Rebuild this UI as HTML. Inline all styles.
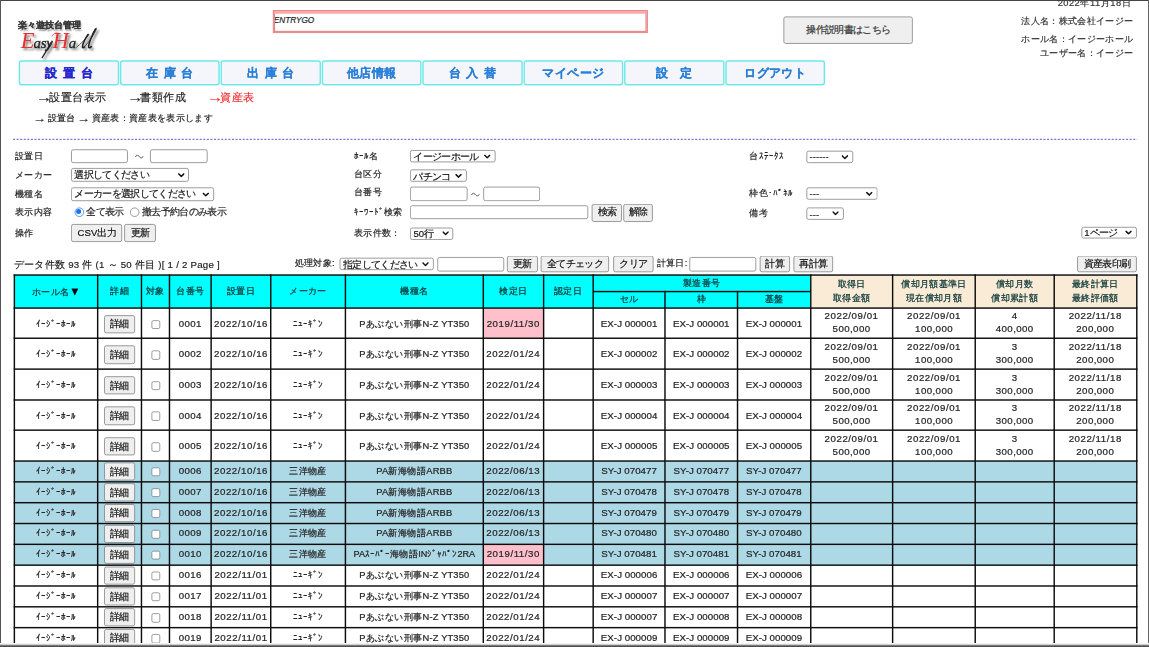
<!DOCTYPE html>
<html lang="ja"><head><meta charset="utf-8"><title>資産表</title>
<style>
html,body{margin:0;padding:0;background:#fff;}
body{width:1149px;height:647px;overflow:hidden;position:relative;font-family:"Liberation Sans",sans-serif;color:#222;}
#pg{position:absolute;left:0;top:0;width:1600px;height:901px;transform:scale(0.718125);transform-origin:0 0;font-size:13px;overflow:hidden;}
.a{position:absolute;box-sizing:border-box;white-space:nowrap;-webkit-text-stroke:.25px;}
.c{text-align:center;}
.r{text-align:right;}
.hd{font-size:13px;color:#333;}
.hdd{letter-spacing:.6px;}
.lb{font-size:13px;color:#222;}
.f13{font-size:13.33px;}
.sub{font-size:16px;color:#222;}
.red{color:#f03030;}
.ar{display:inline-block;transform:scale(1.4,1.15);}
.crumb{font-size:13px;word-spacing:1px;color:#222;}
.th{font-size:13px;color:#0e3a3a;-webkit-text-stroke:.35px;}
.th b{font-size:15px;color:#000;font-weight:normal;}
.td{font-size:13px;color:#262626;-webkit-text-stroke:.32px;}
.v{font-size:13.5px;letter-spacing:.57px;}
.vd{font-size:13.5px;letter-spacing:.75px;}
.vm{font-size:13px;letter-spacing:.2px;}
.ve{font-size:13.5px;letter-spacing:.05px;}
.vc{font-size:13.5px;letter-spacing:.31px;}
.ln{background:#0c0c0c;}
.inp{border:1px solid #767676;border-radius:3px;background:#fff;}
.sel{border:1px solid #767676;border-radius:3px;background:#fff;font-size:13.33px;color:#111;padding-left:3.2px;padding-top:1px;overflow:hidden;}
.sel .chev{position:absolute;right:5.5px;top:50%;margin-top:-2.8px;}
.sel.dash{letter-spacing:0;color:#333}
.btn{border:1px solid #767676;border-radius:3px;background:#efefef;font-size:13.33px;color:#111;text-align:center;}
.btn.big{border-color:#777;border-radius:3px;color:#333}
.radio{width:13px;height:13px;border:1px solid #767676;border-radius:50%;background:#fff;}
.radio.on{border:1.5px solid #1a73e8;}
.radio.on:after{content:"";position:absolute;left:1.5px;top:1.5px;width:7px;height:7px;border-radius:50%;background:#1a73e8;}
.cb{border:1px solid #767676;border-radius:2.5px;background:#fff;}
.nav{border:2px solid #6ee9e9;border-radius:4px;background:#f5f5fc;font-size:17px;font-weight:bold;color:#2a7fd6;text-align:center;letter-spacing:.2px;}
.nav i{display:inline-block;width:7.3px;}
.nav.act{color:#2525cc;}
.ego{border:1px solid #e57f7f;background:#f9a6a6;}
.ego2{position:absolute;left:1px;top:3px;right:1px;bottom:1px;border:1px solid #d25a5a;border-top-color:#f3a0a0;background:#fff;overflow:hidden;}
.ego2 span{position:absolute;left:-2px;top:2px;font-size:11.5px;font-style:italic;line-height:14px;color:#222;}
#frame div{position:absolute;}
</style></head>
<body>
<div id="pg">
<div class="a ego" style="left:380.16px;top:13.93px;width:522.19px;height:32.03px;"><div class="ego2"><span>ENTRYGO</span></div></div>
<div class="a btn big" style="left:1091.04px;top:22.56px;width:180.33px;height:38.57px;line-height:36.57px">操作説明書はこちら</div>
<div class="a r hd hdd" style="left:975.35px;top:-5.27px;width:600px;line-height:20px;">2022年11月18日</div>
<div class="a r hd" style="left:978.28px;top:19.8px;width:600px;line-height:20px;">法人名：株式会社イージー</div>
<div class="a r hd" style="left:978.28px;top:45.14px;width:600px;line-height:20px;">ホール名：イージーホール</div>
<div class="a r hd" style="left:978.28px;top:64.36px;width:600px;line-height:20px;">ユーザー名：イージー</div>
<div class="a nav act" style="left:26.46px;top:84.11px;width:139.6px;height:34.67px;line-height:31.27px">設<i></i>置<i></i>台</div>
<div class="a nav " style="left:166.89px;top:84.11px;width:139.6px;height:34.67px;line-height:31.27px">在<i></i>庫<i></i>台</div>
<div class="a nav " style="left:307.33px;top:84.11px;width:139.6px;height:34.67px;line-height:31.27px">出<i></i>庫<i></i>台</div>
<div class="a nav " style="left:447.76px;top:84.11px;width:139.6px;height:34.67px;line-height:31.27px">他店情報</div>
<div class="a nav " style="left:588.2px;top:84.11px;width:139.6px;height:34.67px;line-height:31.27px">台<i></i>入<i></i>替</div>
<div class="a nav " style="left:728.63px;top:84.11px;width:139.6px;height:34.67px;line-height:31.27px">マイページ</div>
<div class="a nav " style="left:869.07px;top:84.11px;width:139.6px;height:34.67px;line-height:31.27px">設　定</div>
<div class="a nav " style="left:1009.5px;top:84.11px;width:139.6px;height:34.67px;line-height:31.27px">ログアウト</div>
<div class="a sub" style="left:52.92px;top:126.47px;line-height:20px;"><span class="ar">→</span>設置台表示</div>
<div class="a sub" style="left:179.63px;top:126.47px;line-height:20px;"><span class="ar">→</span>書類作成</div>
<div class="a sub red" style="left:291.04px;top:126.47px;line-height:20px;"><span class="ar">→</span>資産表</div>
<div class="a crumb" style="left:48.74px;top:155.29px;line-height:20px;"><span class="ar">→</span> 設置台 <span class="ar">→</span> 資産表：資産表を表示します</div>
<svg class="a" style="left:18.38px;top:192.12px" width="1565.47" height="4"><line x1="0" y1="2" x2="1565.47" y2="2" stroke="#4a4ac0" stroke-width="1.25" stroke-dasharray="2.9 2.1"/></svg>
<div class="a lb" style="left:20.89px;top:206.68px;line-height:20px;">設置日</div>
<div class="a lb" style="left:20.89px;top:233.83px;line-height:20px;">メーカー</div>
<div class="a lb" style="left:20.89px;top:260.01px;line-height:20px;">機種名</div>
<div class="a lb" style="left:20.89px;top:286.19px;line-height:20px;">表示内容</div>
<div class="a lb" style="left:20.89px;top:314.18px;line-height:20px;">操作</div>
<div class="a inp" style="left:99.43px;top:207.9px;width:78.54px;height:19.5px;"></div>
<svg class="a" style="left:187.7px;top:214.93px" width="12" height="6" viewBox="0 0 12 6"><path d="M0.6 3.6 C2 0.4 4 0.4 6 3 C8 5.6 10 5.6 11.4 2.4" fill="none" stroke="#333" stroke-width="1.2"/></svg>
<div class="a inp" style="left:209.43px;top:207.9px;width:79.51px;height:19.5px;"></div>
<div class="a sel " style="left:99.43px;top:234.36px;width:163.62px;height:18.38px;line-height:16.38px"><span>選択してください</span><svg class="chev" width="9" height="6" viewBox="0 0 9 6"><path d="M1 1.2 L4.5 4.6 L8 1.2" fill="none" stroke="#111" stroke-width="2.1" stroke-linecap="square" stroke-linejoin="miter"/></svg></div>
<div class="a sel " style="left:99.43px;top:261.24px;width:198.57px;height:18.38px;line-height:16.38px"><span>メーカーを選択してください</span><svg class="chev" width="9" height="6" viewBox="0 0 9 6"><path d="M1 1.2 L4.5 4.6 L8 1.2" fill="none" stroke="#111" stroke-width="2.1" stroke-linecap="square" stroke-linejoin="miter"/></svg></div>
<div class="a radio on" style="left:103.51px;top:288.99px"></div>
<div class="a lb f13" style="left:120.45px;top:286.19px;line-height:20px;">全て表示</div>
<div class="a radio" style="left:180.93px;top:288.99px"></div>
<div class="a lb f13" style="left:197.6px;top:286.19px;line-height:20px;">撤去予約台のみ表示</div>
<div class="a btn " style="left:99.43px;top:312.2px;width:70.74px;height:24.65px;line-height:22.65px">CSV出力</div>
<div class="a btn " style="left:172.67px;top:312.2px;width:44.56px;height:24.65px;line-height:22.65px">更新</div>
<div class="a lb" style="left:492.81px;top:207.23px;line-height:20px;">ﾎｰﾙ名</div>
<div class="a lb" style="left:492.81px;top:232.85px;line-height:20px;">台区分</div>
<div class="a lb" style="left:492.81px;top:258.34px;line-height:20px;">台番号</div>
<div class="a lb" style="left:492.81px;top:286.33px;line-height:20px;">ｷｰﾜｰﾄﾞ検索</div>
<div class="a lb" style="left:492.81px;top:314.46px;line-height:20px;">表示件数：</div>
<div class="a sel " style="left:571.49px;top:209.02px;width:118.22px;height:17.27px;line-height:15.27px"><span>イージーホール</span><svg class="chev" width="9" height="6" viewBox="0 0 9 6"><path d="M1 1.2 L4.5 4.6 L8 1.2" fill="none" stroke="#111" stroke-width="2.1" stroke-linecap="square" stroke-linejoin="miter"/></svg></div>
<div class="a sel " style="left:571.49px;top:235.75px;width:78.26px;height:17.41px;line-height:15.41px"><span>パチンコ</span><svg class="chev" width="9" height="6" viewBox="0 0 9 6"><path d="M1 1.2 L4.5 4.6 L8 1.2" fill="none" stroke="#111" stroke-width="2.1" stroke-linecap="square" stroke-linejoin="miter"/></svg></div>
<div class="a inp" style="left:571.49px;top:260.12px;width:79.09px;height:19.77px;"></div>
<svg class="a" style="left:655.86px;top:267.57px" width="12" height="6" viewBox="0 0 12 6"><path d="M0.6 3.6 C2 0.4 4 0.4 6 3 C8 5.6 10 5.6 11.4 2.4" fill="none" stroke="#333" stroke-width="1.2"/></svg>
<div class="a inp" style="left:673.28px;top:260.12px;width:78.26px;height:19.77px;"></div>
<div class="a inp" style="left:571.49px;top:286.44px;width:247.17px;height:18.94px;"></div>
<div class="a btn " style="left:824.37px;top:284.07px;width:41.78px;height:24.65px;line-height:22.65px">検索</div>
<div class="a btn " style="left:867.68px;top:284.07px;width:41.22px;height:24.65px;line-height:22.65px">解除</div>
<div class="a sel " style="left:571.49px;top:316.94px;width:59.74px;height:16.57px;line-height:14.57px"><span>50行</span><svg class="chev" width="9" height="6" viewBox="0 0 9 6"><path d="M1 1.2 L4.5 4.6 L8 1.2" fill="none" stroke="#111" stroke-width="2.1" stroke-linecap="square" stroke-linejoin="miter"/></svg></div>
<div class="a lb" style="left:1043.41px;top:207.65px;line-height:20px;">台ｽﾃｰﾀｽ</div>
<div class="a lb" style="left:1043.41px;top:258.89px;line-height:20px;">枠色･ﾊﾟﾈﾙ</div>
<div class="a lb" style="left:1043.41px;top:286.88px;line-height:20px;">備考</div>
<div class="a sel dash" style="left:1123.2px;top:209.99px;width:64.47px;height:16.71px;line-height:14.71px"><span>------</span><svg class="chev" width="9" height="6" viewBox="0 0 9 6"><path d="M1 1.2 L4.5 4.6 L8 1.2" fill="none" stroke="#111" stroke-width="2.1" stroke-linecap="square" stroke-linejoin="miter"/></svg></div>
<div class="a sel dash" style="left:1123.2px;top:260.82px;width:98.45px;height:17.68px;line-height:15.68px"><span>---</span><svg class="chev" width="9" height="6" viewBox="0 0 9 6"><path d="M1 1.2 L4.5 4.6 L8 1.2" fill="none" stroke="#111" stroke-width="2.1" stroke-linecap="square" stroke-linejoin="miter"/></svg></div>
<div class="a sel dash" style="left:1123.2px;top:288.67px;width:51.8px;height:17.27px;line-height:15.27px"><span>---</span><svg class="chev" width="9" height="6" viewBox="0 0 9 6"><path d="M1 1.2 L4.5 4.6 L8 1.2" fill="none" stroke="#111" stroke-width="2.1" stroke-linecap="square" stroke-linejoin="miter"/></svg></div>
<div class="a sel " style="left:1505.59px;top:316.1px;width:77.15px;height:16.29px;line-height:14.29px"><span>1ページ</span><svg class="chev" width="9" height="6" viewBox="0 0 9 6"><path d="M1 1.2 L4.5 4.6 L8 1.2" fill="none" stroke="#111" stroke-width="2.1" stroke-linecap="square" stroke-linejoin="miter"/></svg></div>
<div class="a lb vc" style="left:19.36px;top:358.74px;line-height:20px;">データ件数 93 件 (1 ～ 50 件目 )[ 1 / 2 Page ]</div>
<div class="a lb" style="left:410.23px;top:357.21px;line-height:20px;">処理対象:</div>
<div class="a sel " style="left:473.32px;top:358.85px;width:130.34px;height:16.99px;line-height:14.99px"><span>指定してください</span><svg class="chev" width="9" height="6" viewBox="0 0 9 6"><path d="M1 1.2 L4.5 4.6 L8 1.2" fill="none" stroke="#111" stroke-width="2.1" stroke-linecap="square" stroke-linejoin="miter"/></svg></div>
<div class="a inp" style="left:608.53px;top:357.88px;width:93.02px;height:19.91px;"></div>
<div class="a btn " style="left:706.42px;top:356.07px;width:42.19px;height:23.26px;line-height:21.26px">更新</div>
<div class="a btn " style="left:753.49px;top:356.07px;width:94.55px;height:23.26px;line-height:21.26px">全てチェック</div>
<div class="a btn " style="left:854.31px;top:356.07px;width:55.7px;height:23.26px;line-height:21.26px">クリア</div>
<div class="a lb" style="left:914.6px;top:357.21px;line-height:20px;">計算日:</div>
<div class="a inp" style="left:960.28px;top:357.88px;width:93.16px;height:19.91px;"></div>
<div class="a btn " style="left:1057.75px;top:356.07px;width:42.05px;height:23.26px;line-height:21.26px">計算</div>
<div class="a btn " style="left:1104.68px;top:356.07px;width:55.56px;height:23.26px;line-height:21.26px">再計算</div>
<div class="a btn " style="left:1500.16px;top:356.07px;width:82.72px;height:23.26px;line-height:21.26px">資産表印刷</div>
<div class="a " style="left:20.19px;top:382.52px;width:1108.44px;height:46.23px;background:#00ffff;"></div>
<div class="a " style="left:1128.63px;top:382.52px;width:454.1px;height:46.23px;background:#faebd7;"></div>
<div class="a c th" style="left:-121.81px;top:395.64px;width:400px;line-height:20px;">ホール名<b>▼</b></div>
<div class="a c th" style="left:-33.59px;top:395.64px;width:400px;line-height:20px;">詳細</div>
<div class="a c th" style="left:16.19px;top:395.64px;width:400px;line-height:20px;">対象</div>
<div class="a c th" style="left:65px;top:395.64px;width:400px;line-height:20px;">台番号</div>
<div class="a c th" style="left:135.67px;top:395.64px;width:400px;line-height:20px;">設置日</div>
<div class="a c th" style="left:229.03px;top:395.64px;width:400px;line-height:20px;">メーカー</div>
<div class="a c th" style="left:376.99px;top:395.64px;width:400px;line-height:20px;">機種名</div>
<div class="a c th" style="left:514.78px;top:395.64px;width:400px;line-height:20px;">検定日</div>
<div class="a c th" style="left:591.09px;top:395.64px;width:400px;line-height:20px;">認定日</div>
<div class="a c th" style="left:777.13px;top:384.22px;width:400px;line-height:20px;">製造番号</div>
<div class="a c th" style="left:676.03px;top:407.34px;width:400px;line-height:20px;">セル</div>
<div class="a c th" style="left:776.57px;top:407.34px;width:400px;line-height:20px;">枠</div>
<div class="a c th" style="left:877.67px;top:407.34px;width:400px;line-height:20px;">基盤</div>
<div class="a c th" style="left:985.8px;top:385.47px;width:400px;line-height:20px;">取得日</div>
<div class="a c th" style="left:985.8px;top:405.25px;width:400px;line-height:20px;">取得金額</div>
<div class="a c th" style="left:1100.68px;top:385.47px;width:400px;line-height:20px;">償却月額基準日</div>
<div class="a c th" style="left:1100.68px;top:405.25px;width:400px;line-height:20px;">現在償却月額</div>
<div class="a c th" style="left:1212.99px;top:385.47px;width:400px;line-height:20px;">償却月数</div>
<div class="a c th" style="left:1212.99px;top:405.25px;width:400px;line-height:20px;">償却累計額</div>
<div class="a c th" style="left:1325.15px;top:385.47px;width:400px;line-height:20px;">最終計算日</div>
<div class="a c th" style="left:1325.15px;top:405.25px;width:400px;line-height:20px;">最終評価額</div>
<div class="a " style="left:673px;top:428.76px;width:83.55px;height:42.62px;background:#ffc0cb;"></div>
<div class="a c td" style="left:-121.81px;top:440.83px;width:400px;line-height:20px;">ｲｰｼﾞｰﾎｰﾙ</div>
<div class="a btn" style="left:144.68px;top:438.58px;width:43.45px;height:25.34px;line-height:23.34px">詳細</div>
<div class="a cb" style="left:210.76px;top:445.54px;width:12.53px;height:12.53px;"></div>
<div class="a c td v" style="left:65px;top:440.83px;width:400px;line-height:20px;">0001</div>
<div class="a c td vd" style="left:135.67px;top:440.83px;width:400px;line-height:20px;">2022/10/16</div>
<div class="a c td" style="left:229.03px;top:440.83px;width:400px;line-height:20px;">ﾆｭｰｷﾞﾝ</div>
<div class="a c td vm" style="left:376.99px;top:440.83px;width:400px;line-height:20px;">Pあぶない刑事N-Z YT350</div>
<div class="a c td vd" style="left:514.78px;top:440.83px;width:400px;line-height:20px;">2019/11/30</div>
<div class="a c td ve" style="left:676.03px;top:440.83px;width:400px;line-height:20px;">EX-J 000001</div>
<div class="a c td ve" style="left:776.57px;top:440.83px;width:400px;line-height:20px;">EX-J 000001</div>
<div class="a c td ve" style="left:877.67px;top:440.83px;width:400px;line-height:20px;">EX-J 000001</div>
<div class="a c td vd" style="left:985.8px;top:430.45px;width:400px;line-height:20px;">2022/09/01</div>
<div class="a c td v" style="left:985.8px;top:449.25px;width:400px;line-height:20px;">500,000</div>
<div class="a c td vd" style="left:1100.68px;top:430.45px;width:400px;line-height:20px;">2022/09/01</div>
<div class="a c td v" style="left:1100.68px;top:449.25px;width:400px;line-height:20px;">100,000</div>
<div class="a c td v" style="left:1212.99px;top:430.45px;width:400px;line-height:20px;">4</div>
<div class="a c td v" style="left:1212.99px;top:449.25px;width:400px;line-height:20px;">400,000</div>
<div class="a c td vd" style="left:1325.15px;top:430.45px;width:400px;line-height:20px;">2022/11/18</div>
<div class="a c td v" style="left:1325.15px;top:449.25px;width:400px;line-height:20px;">200,000</div>
<div class="a c td" style="left:-121.81px;top:483.46px;width:400px;line-height:20px;">ｲｰｼﾞｰﾎｰﾙ</div>
<div class="a btn" style="left:144.68px;top:481.2px;width:43.45px;height:25.34px;line-height:23.34px">詳細</div>
<div class="a cb" style="left:210.76px;top:488.17px;width:12.53px;height:12.53px;"></div>
<div class="a c td v" style="left:65px;top:483.46px;width:400px;line-height:20px;">0002</div>
<div class="a c td vd" style="left:135.67px;top:483.46px;width:400px;line-height:20px;">2022/10/16</div>
<div class="a c td" style="left:229.03px;top:483.46px;width:400px;line-height:20px;">ﾆｭｰｷﾞﾝ</div>
<div class="a c td vm" style="left:376.99px;top:483.46px;width:400px;line-height:20px;">Pあぶない刑事N-Z YT350</div>
<div class="a c td vd" style="left:514.78px;top:483.46px;width:400px;line-height:20px;">2022/01/24</div>
<div class="a c td ve" style="left:676.03px;top:483.46px;width:400px;line-height:20px;">EX-J 000002</div>
<div class="a c td ve" style="left:776.57px;top:483.46px;width:400px;line-height:20px;">EX-J 000002</div>
<div class="a c td ve" style="left:877.67px;top:483.46px;width:400px;line-height:20px;">EX-J 000002</div>
<div class="a c td vd" style="left:985.8px;top:473.08px;width:400px;line-height:20px;">2022/09/01</div>
<div class="a c td v" style="left:985.8px;top:491.88px;width:400px;line-height:20px;">500,000</div>
<div class="a c td vd" style="left:1100.68px;top:473.08px;width:400px;line-height:20px;">2022/09/01</div>
<div class="a c td v" style="left:1100.68px;top:491.88px;width:400px;line-height:20px;">100,000</div>
<div class="a c td v" style="left:1212.99px;top:473.08px;width:400px;line-height:20px;">3</div>
<div class="a c td v" style="left:1212.99px;top:491.88px;width:400px;line-height:20px;">300,000</div>
<div class="a c td vd" style="left:1325.15px;top:473.08px;width:400px;line-height:20px;">2022/11/18</div>
<div class="a c td v" style="left:1325.15px;top:491.88px;width:400px;line-height:20px;">200,000</div>
<div class="a c td" style="left:-121.81px;top:526.08px;width:400px;line-height:20px;">ｲｰｼﾞｰﾎｰﾙ</div>
<div class="a btn" style="left:144.68px;top:523.83px;width:43.45px;height:25.34px;line-height:23.34px">詳細</div>
<div class="a cb" style="left:210.76px;top:530.79px;width:12.53px;height:12.53px;"></div>
<div class="a c td v" style="left:65px;top:526.08px;width:400px;line-height:20px;">0003</div>
<div class="a c td vd" style="left:135.67px;top:526.08px;width:400px;line-height:20px;">2022/10/16</div>
<div class="a c td" style="left:229.03px;top:526.08px;width:400px;line-height:20px;">ﾆｭｰｷﾞﾝ</div>
<div class="a c td vm" style="left:376.99px;top:526.08px;width:400px;line-height:20px;">Pあぶない刑事N-Z YT350</div>
<div class="a c td vd" style="left:514.78px;top:526.08px;width:400px;line-height:20px;">2022/01/24</div>
<div class="a c td ve" style="left:676.03px;top:526.08px;width:400px;line-height:20px;">EX-J 000003</div>
<div class="a c td ve" style="left:776.57px;top:526.08px;width:400px;line-height:20px;">EX-J 000003</div>
<div class="a c td ve" style="left:877.67px;top:526.08px;width:400px;line-height:20px;">EX-J 000003</div>
<div class="a c td vd" style="left:985.8px;top:515.7px;width:400px;line-height:20px;">2022/09/01</div>
<div class="a c td v" style="left:985.8px;top:534.5px;width:400px;line-height:20px;">500,000</div>
<div class="a c td vd" style="left:1100.68px;top:515.7px;width:400px;line-height:20px;">2022/09/01</div>
<div class="a c td v" style="left:1100.68px;top:534.5px;width:400px;line-height:20px;">100,000</div>
<div class="a c td v" style="left:1212.99px;top:515.7px;width:400px;line-height:20px;">3</div>
<div class="a c td v" style="left:1212.99px;top:534.5px;width:400px;line-height:20px;">300,000</div>
<div class="a c td vd" style="left:1325.15px;top:515.7px;width:400px;line-height:20px;">2022/11/18</div>
<div class="a c td v" style="left:1325.15px;top:534.5px;width:400px;line-height:20px;">200,000</div>
<div class="a c td" style="left:-121.81px;top:568.71px;width:400px;line-height:20px;">ｲｰｼﾞｰﾎｰﾙ</div>
<div class="a btn" style="left:144.68px;top:566.45px;width:43.45px;height:25.34px;line-height:23.34px">詳細</div>
<div class="a cb" style="left:210.76px;top:573.42px;width:12.53px;height:12.53px;"></div>
<div class="a c td v" style="left:65px;top:568.71px;width:400px;line-height:20px;">0004</div>
<div class="a c td vd" style="left:135.67px;top:568.71px;width:400px;line-height:20px;">2022/10/16</div>
<div class="a c td" style="left:229.03px;top:568.71px;width:400px;line-height:20px;">ﾆｭｰｷﾞﾝ</div>
<div class="a c td vm" style="left:376.99px;top:568.71px;width:400px;line-height:20px;">Pあぶない刑事N-Z YT350</div>
<div class="a c td vd" style="left:514.78px;top:568.71px;width:400px;line-height:20px;">2022/01/24</div>
<div class="a c td ve" style="left:676.03px;top:568.71px;width:400px;line-height:20px;">EX-J 000004</div>
<div class="a c td ve" style="left:776.57px;top:568.71px;width:400px;line-height:20px;">EX-J 000004</div>
<div class="a c td ve" style="left:877.67px;top:568.71px;width:400px;line-height:20px;">EX-J 000004</div>
<div class="a c td vd" style="left:985.8px;top:558.33px;width:400px;line-height:20px;">2022/09/01</div>
<div class="a c td v" style="left:985.8px;top:577.13px;width:400px;line-height:20px;">500,000</div>
<div class="a c td vd" style="left:1100.68px;top:558.33px;width:400px;line-height:20px;">2022/09/01</div>
<div class="a c td v" style="left:1100.68px;top:577.13px;width:400px;line-height:20px;">100,000</div>
<div class="a c td v" style="left:1212.99px;top:558.33px;width:400px;line-height:20px;">3</div>
<div class="a c td v" style="left:1212.99px;top:577.13px;width:400px;line-height:20px;">300,000</div>
<div class="a c td vd" style="left:1325.15px;top:558.33px;width:400px;line-height:20px;">2022/11/18</div>
<div class="a c td v" style="left:1325.15px;top:577.13px;width:400px;line-height:20px;">200,000</div>
<div class="a c td" style="left:-121.81px;top:611.33px;width:400px;line-height:20px;">ｲｰｼﾞｰﾎｰﾙ</div>
<div class="a btn" style="left:144.68px;top:609.08px;width:43.45px;height:25.34px;line-height:23.34px">詳細</div>
<div class="a cb" style="left:210.76px;top:616.04px;width:12.53px;height:12.53px;"></div>
<div class="a c td v" style="left:65px;top:611.33px;width:400px;line-height:20px;">0005</div>
<div class="a c td vd" style="left:135.67px;top:611.33px;width:400px;line-height:20px;">2022/10/16</div>
<div class="a c td" style="left:229.03px;top:611.33px;width:400px;line-height:20px;">ﾆｭｰｷﾞﾝ</div>
<div class="a c td vm" style="left:376.99px;top:611.33px;width:400px;line-height:20px;">Pあぶない刑事N-Z YT350</div>
<div class="a c td vd" style="left:514.78px;top:611.33px;width:400px;line-height:20px;">2022/01/24</div>
<div class="a c td ve" style="left:676.03px;top:611.33px;width:400px;line-height:20px;">EX-J 000005</div>
<div class="a c td ve" style="left:776.57px;top:611.33px;width:400px;line-height:20px;">EX-J 000005</div>
<div class="a c td ve" style="left:877.67px;top:611.33px;width:400px;line-height:20px;">EX-J 000005</div>
<div class="a c td vd" style="left:985.8px;top:600.95px;width:400px;line-height:20px;">2022/09/01</div>
<div class="a c td v" style="left:985.8px;top:619.75px;width:400px;line-height:20px;">500,000</div>
<div class="a c td vd" style="left:1100.68px;top:600.95px;width:400px;line-height:20px;">2022/09/01</div>
<div class="a c td v" style="left:1100.68px;top:619.75px;width:400px;line-height:20px;">100,000</div>
<div class="a c td v" style="left:1212.99px;top:600.95px;width:400px;line-height:20px;">3</div>
<div class="a c td v" style="left:1212.99px;top:619.75px;width:400px;line-height:20px;">300,000</div>
<div class="a c td vd" style="left:1325.15px;top:600.95px;width:400px;line-height:20px;">2022/11/18</div>
<div class="a c td v" style="left:1325.15px;top:619.75px;width:400px;line-height:20px;">200,000</div>
<div class="a " style="left:20.19px;top:641.88px;width:1562.54px;height:29.03px;background:#add8e6;"></div>
<div class="a c td" style="left:-121.81px;top:646.05px;width:400px;line-height:20px;">ｲｰｼﾞｰﾎｰﾙ</div>
<div class="a btn" style="left:144.68px;top:643.79px;width:43.45px;height:25.34px;line-height:23.34px">詳細</div>
<div class="a cb" style="left:210.76px;top:650.76px;width:12.53px;height:12.53px;"></div>
<div class="a c td v" style="left:65px;top:646.05px;width:400px;line-height:20px;">0006</div>
<div class="a c td vd" style="left:135.67px;top:646.05px;width:400px;line-height:20px;">2022/10/16</div>
<div class="a c td" style="left:229.03px;top:646.05px;width:400px;line-height:20px;">三洋物産</div>
<div class="a c td vm" style="left:376.99px;top:646.05px;width:400px;line-height:20px;">PA新海物語ARBB</div>
<div class="a c td vd" style="left:514.78px;top:646.05px;width:400px;line-height:20px;">2022/06/13</div>
<div class="a c td ve" style="left:676.03px;top:646.05px;width:400px;line-height:20px;">SY-J 070477</div>
<div class="a c td ve" style="left:776.57px;top:646.05px;width:400px;line-height:20px;">SY-J 070477</div>
<div class="a c td ve" style="left:877.67px;top:646.05px;width:400px;line-height:20px;">SY-J 070477</div>
<div class="a " style="left:20.19px;top:670.91px;width:1562.54px;height:29.03px;background:#add8e6;"></div>
<div class="a c td" style="left:-121.81px;top:675.08px;width:400px;line-height:20px;">ｲｰｼﾞｰﾎｰﾙ</div>
<div class="a btn" style="left:144.68px;top:672.83px;width:43.45px;height:25.34px;line-height:23.34px">詳細</div>
<div class="a cb" style="left:210.76px;top:679.79px;width:12.53px;height:12.53px;"></div>
<div class="a c td v" style="left:65px;top:675.08px;width:400px;line-height:20px;">0007</div>
<div class="a c td vd" style="left:135.67px;top:675.08px;width:400px;line-height:20px;">2022/10/16</div>
<div class="a c td" style="left:229.03px;top:675.08px;width:400px;line-height:20px;">三洋物産</div>
<div class="a c td vm" style="left:376.99px;top:675.08px;width:400px;line-height:20px;">PA新海物語ARBB</div>
<div class="a c td vd" style="left:514.78px;top:675.08px;width:400px;line-height:20px;">2022/06/13</div>
<div class="a c td ve" style="left:676.03px;top:675.08px;width:400px;line-height:20px;">SY-J 070478</div>
<div class="a c td ve" style="left:776.57px;top:675.08px;width:400px;line-height:20px;">SY-J 070478</div>
<div class="a c td ve" style="left:877.67px;top:675.08px;width:400px;line-height:20px;">SY-J 070478</div>
<div class="a " style="left:20.19px;top:699.95px;width:1562.54px;height:29.03px;background:#add8e6;"></div>
<div class="a c td" style="left:-121.81px;top:704.12px;width:400px;line-height:20px;">ｲｰｼﾞｰﾎｰﾙ</div>
<div class="a btn" style="left:144.68px;top:701.86px;width:43.45px;height:25.34px;line-height:23.34px">詳細</div>
<div class="a cb" style="left:210.76px;top:708.83px;width:12.53px;height:12.53px;"></div>
<div class="a c td v" style="left:65px;top:704.12px;width:400px;line-height:20px;">0008</div>
<div class="a c td vd" style="left:135.67px;top:704.12px;width:400px;line-height:20px;">2022/10/16</div>
<div class="a c td" style="left:229.03px;top:704.12px;width:400px;line-height:20px;">三洋物産</div>
<div class="a c td vm" style="left:376.99px;top:704.12px;width:400px;line-height:20px;">PA新海物語ARBB</div>
<div class="a c td vd" style="left:514.78px;top:704.12px;width:400px;line-height:20px;">2022/06/13</div>
<div class="a c td ve" style="left:676.03px;top:704.12px;width:400px;line-height:20px;">SY-J 070479</div>
<div class="a c td ve" style="left:776.57px;top:704.12px;width:400px;line-height:20px;">SY-J 070479</div>
<div class="a c td ve" style="left:877.67px;top:704.12px;width:400px;line-height:20px;">SY-J 070479</div>
<div class="a " style="left:20.19px;top:728.98px;width:1562.54px;height:29.03px;background:#add8e6;"></div>
<div class="a c td" style="left:-121.81px;top:733.15px;width:400px;line-height:20px;">ｲｰｼﾞｰﾎｰﾙ</div>
<div class="a btn" style="left:144.68px;top:730.9px;width:43.45px;height:25.34px;line-height:23.34px">詳細</div>
<div class="a cb" style="left:210.76px;top:737.86px;width:12.53px;height:12.53px;"></div>
<div class="a c td v" style="left:65px;top:733.15px;width:400px;line-height:20px;">0009</div>
<div class="a c td vd" style="left:135.67px;top:733.15px;width:400px;line-height:20px;">2022/10/16</div>
<div class="a c td" style="left:229.03px;top:733.15px;width:400px;line-height:20px;">三洋物産</div>
<div class="a c td vm" style="left:376.99px;top:733.15px;width:400px;line-height:20px;">PA新海物語ARBB</div>
<div class="a c td vd" style="left:514.78px;top:733.15px;width:400px;line-height:20px;">2022/06/13</div>
<div class="a c td ve" style="left:676.03px;top:733.15px;width:400px;line-height:20px;">SY-J 070480</div>
<div class="a c td ve" style="left:776.57px;top:733.15px;width:400px;line-height:20px;">SY-J 070480</div>
<div class="a c td ve" style="left:877.67px;top:733.15px;width:400px;line-height:20px;">SY-J 070480</div>
<div class="a " style="left:20.19px;top:758.02px;width:1562.54px;height:29.03px;background:#add8e6;"></div>
<div class="a " style="left:673px;top:758.02px;width:83.55px;height:29.03px;background:#ffc0cb;"></div>
<div class="a c td" style="left:-121.81px;top:762.18px;width:400px;line-height:20px;">ｲｰｼﾞｰﾎｰﾙ</div>
<div class="a btn" style="left:144.68px;top:759.93px;width:43.45px;height:25.34px;line-height:23.34px">詳細</div>
<div class="a cb" style="left:210.76px;top:766.89px;width:12.53px;height:12.53px;"></div>
<div class="a c td v" style="left:65px;top:762.18px;width:400px;line-height:20px;">0010</div>
<div class="a c td vd" style="left:135.67px;top:762.18px;width:400px;line-height:20px;">2022/10/16</div>
<div class="a c td" style="left:229.03px;top:762.18px;width:400px;line-height:20px;">三洋物産</div>
<div class="a c td vm" style="left:376.99px;top:762.18px;width:400px;line-height:20px;letter-spacing:0;font-size:12.7px;">PAｽｰﾊﾟｰ海物語INｼﾞｬﾊﾟﾝ2RA</div>
<div class="a c td vd" style="left:514.78px;top:762.18px;width:400px;line-height:20px;">2019/11/30</div>
<div class="a c td ve" style="left:676.03px;top:762.18px;width:400px;line-height:20px;">SY-J 070481</div>
<div class="a c td ve" style="left:776.57px;top:762.18px;width:400px;line-height:20px;">SY-J 070481</div>
<div class="a c td ve" style="left:877.67px;top:762.18px;width:400px;line-height:20px;">SY-J 070481</div>
<div class="a c td" style="left:-121.81px;top:791.22px;width:400px;line-height:20px;">ｲｰｼﾞｰﾎｰﾙ</div>
<div class="a btn" style="left:144.68px;top:788.96px;width:43.45px;height:25.34px;line-height:23.34px">詳細</div>
<div class="a cb" style="left:210.76px;top:795.93px;width:12.53px;height:12.53px;"></div>
<div class="a c td v" style="left:65px;top:791.22px;width:400px;line-height:20px;">0016</div>
<div class="a c td vd" style="left:135.67px;top:791.22px;width:400px;line-height:20px;">2022/11/01</div>
<div class="a c td" style="left:229.03px;top:791.22px;width:400px;line-height:20px;">ﾆｭｰｷﾞﾝ</div>
<div class="a c td vm" style="left:376.99px;top:791.22px;width:400px;line-height:20px;">Pあぶない刑事N-Z YT350</div>
<div class="a c td vd" style="left:514.78px;top:791.22px;width:400px;line-height:20px;">2022/01/24</div>
<div class="a c td ve" style="left:676.03px;top:791.22px;width:400px;line-height:20px;">EX-J 000006</div>
<div class="a c td ve" style="left:776.57px;top:791.22px;width:400px;line-height:20px;">EX-J 000006</div>
<div class="a c td ve" style="left:877.67px;top:791.22px;width:400px;line-height:20px;">EX-J 000006</div>
<div class="a c td" style="left:-121.81px;top:820.25px;width:400px;line-height:20px;">ｲｰｼﾞｰﾎｰﾙ</div>
<div class="a btn" style="left:144.68px;top:818px;width:43.45px;height:25.34px;line-height:23.34px">詳細</div>
<div class="a cb" style="left:210.76px;top:824.96px;width:12.53px;height:12.53px;"></div>
<div class="a c td v" style="left:65px;top:820.25px;width:400px;line-height:20px;">0017</div>
<div class="a c td vd" style="left:135.67px;top:820.25px;width:400px;line-height:20px;">2022/11/01</div>
<div class="a c td" style="left:229.03px;top:820.25px;width:400px;line-height:20px;">ﾆｭｰｷﾞﾝ</div>
<div class="a c td vm" style="left:376.99px;top:820.25px;width:400px;line-height:20px;">Pあぶない刑事N-Z YT350</div>
<div class="a c td vd" style="left:514.78px;top:820.25px;width:400px;line-height:20px;">2022/01/24</div>
<div class="a c td ve" style="left:676.03px;top:820.25px;width:400px;line-height:20px;">EX-J 000007</div>
<div class="a c td ve" style="left:776.57px;top:820.25px;width:400px;line-height:20px;">EX-J 000007</div>
<div class="a c td ve" style="left:877.67px;top:820.25px;width:400px;line-height:20px;">EX-J 000007</div>
<div class="a c td" style="left:-121.81px;top:849.29px;width:400px;line-height:20px;">ｲｰｼﾞｰﾎｰﾙ</div>
<div class="a btn" style="left:144.68px;top:847.03px;width:43.45px;height:25.34px;line-height:23.34px">詳細</div>
<div class="a cb" style="left:210.76px;top:853.99px;width:12.53px;height:12.53px;"></div>
<div class="a c td v" style="left:65px;top:849.29px;width:400px;line-height:20px;">0018</div>
<div class="a c td vd" style="left:135.67px;top:849.29px;width:400px;line-height:20px;">2022/11/01</div>
<div class="a c td" style="left:229.03px;top:849.29px;width:400px;line-height:20px;">ﾆｭｰｷﾞﾝ</div>
<div class="a c td vm" style="left:376.99px;top:849.29px;width:400px;line-height:20px;">Pあぶない刑事N-Z YT350</div>
<div class="a c td vd" style="left:514.78px;top:849.29px;width:400px;line-height:20px;">2022/01/24</div>
<div class="a c td ve" style="left:676.03px;top:849.29px;width:400px;line-height:20px;">EX-J 000007</div>
<div class="a c td ve" style="left:776.57px;top:849.29px;width:400px;line-height:20px;">EX-J 000008</div>
<div class="a c td ve" style="left:877.67px;top:849.29px;width:400px;line-height:20px;">EX-J 000008</div>
<div class="a c td" style="left:-121.81px;top:878.32px;width:400px;line-height:20px;">ｲｰｼﾞｰﾎｰﾙ</div>
<div class="a btn" style="left:144.68px;top:876.07px;width:43.45px;height:25.34px;line-height:23.34px">詳細</div>
<div class="a cb" style="left:210.76px;top:883.03px;width:12.53px;height:12.53px;"></div>
<div class="a c td v" style="left:65px;top:878.32px;width:400px;line-height:20px;">0019</div>
<div class="a c td vd" style="left:135.67px;top:878.32px;width:400px;line-height:20px;">2022/11/01</div>
<div class="a c td" style="left:229.03px;top:878.32px;width:400px;line-height:20px;">ﾆｭｰｷﾞﾝ</div>
<div class="a c td vm" style="left:376.99px;top:878.32px;width:400px;line-height:20px;">Pあぶない刑事N-Z YT350</div>
<div class="a c td vd" style="left:514.78px;top:878.32px;width:400px;line-height:20px;">2022/01/24</div>
<div class="a c td ve" style="left:676.03px;top:878.32px;width:400px;line-height:20px;">EX-J 000009</div>
<div class="a c td ve" style="left:776.57px;top:878.32px;width:400px;line-height:20px;">EX-J 000009</div>
<div class="a c td ve" style="left:877.67px;top:878.32px;width:400px;line-height:20px;">EX-J 000009</div>
<div class="a c td" style="left:-121.81px;top:907.35px;width:400px;line-height:20px;">ｲｰｼﾞｰﾎｰﾙ</div>
<div class="a btn" style="left:144.68px;top:905.1px;width:43.45px;height:25.34px;line-height:23.34px">詳細</div>
<div class="a cb" style="left:210.76px;top:912.06px;width:12.53px;height:12.53px;"></div>
<div class="a c td v" style="left:65px;top:907.35px;width:400px;line-height:20px;">0020</div>
<div class="a c td vd" style="left:135.67px;top:907.35px;width:400px;line-height:20px;">2022/11/01</div>
<div class="a c td" style="left:229.03px;top:907.35px;width:400px;line-height:20px;">ﾆｭｰｷﾞﾝ</div>
<div class="a c td vm" style="left:376.99px;top:907.35px;width:400px;line-height:20px;">Pあぶない刑事N-Z YT350</div>
<div class="a c td vd" style="left:514.78px;top:907.35px;width:400px;line-height:20px;">2022/01/24</div>
<div class="a c td ve" style="left:676.03px;top:907.35px;width:400px;line-height:20px;">EX-J 000010</div>
<div class="a c td ve" style="left:776.57px;top:907.35px;width:400px;line-height:20px;">EX-J 000010</div>
<div class="a c td ve" style="left:877.67px;top:907.35px;width:400px;line-height:20px;">EX-J 000010</div>
<div class="a ln" style="left:19.19px;top:381.52px;width:2px;height:537.48px;"></div>
<div class="a ln" style="left:135.19px;top:381.52px;width:2px;height:537.48px;"></div>
<div class="a ln" style="left:195.62px;top:381.52px;width:2px;height:537.48px;"></div>
<div class="a ln" style="left:234.75px;top:381.52px;width:2px;height:537.48px;"></div>
<div class="a ln" style="left:293.24px;top:381.52px;width:2px;height:537.48px;"></div>
<div class="a ln" style="left:376.09px;top:381.52px;width:2px;height:537.48px;"></div>
<div class="a ln" style="left:479.97px;top:381.52px;width:2px;height:537.48px;"></div>
<div class="a ln" style="left:672px;top:381.52px;width:2px;height:537.48px;"></div>
<div class="a ln" style="left:755.55px;top:381.52px;width:2px;height:537.48px;"></div>
<div class="a ln" style="left:824.62px;top:381.52px;width:2px;height:537.48px;"></div>
<div class="a ln" style="left:925.44px;top:404.92px;width:2px;height:514.08px;"></div>
<div class="a ln" style="left:1025.7px;top:404.92px;width:2px;height:514.08px;"></div>
<div class="a ln" style="left:1127.63px;top:381.52px;width:2px;height:537.48px;"></div>
<div class="a ln" style="left:1241.96px;top:381.52px;width:2px;height:537.48px;"></div>
<div class="a ln" style="left:1357.4px;top:381.52px;width:2px;height:537.48px;"></div>
<div class="a ln" style="left:1466.57px;top:381.52px;width:2px;height:537.48px;"></div>
<div class="a ln" style="left:1581.73px;top:381.52px;width:2px;height:537.48px;"></div>
<div class="a ln" style="left:19.19px;top:381.52px;width:1564.54px;height:2px;"></div>
<div class="a ln" style="left:19.19px;top:427.76px;width:1564.54px;height:2px;"></div>
<div class="a ln" style="left:19.19px;top:470.38px;width:1564.54px;height:2px;"></div>
<div class="a ln" style="left:19.19px;top:513.01px;width:1564.54px;height:2px;"></div>
<div class="a ln" style="left:19.19px;top:555.63px;width:1564.54px;height:2px;"></div>
<div class="a ln" style="left:19.19px;top:598.26px;width:1564.54px;height:2px;"></div>
<div class="a ln" style="left:19.19px;top:640.88px;width:1564.54px;height:2px;"></div>
<div class="a ln" style="left:19.19px;top:669.91px;width:1564.54px;height:2px;"></div>
<div class="a ln" style="left:19.19px;top:698.95px;width:1564.54px;height:2px;"></div>
<div class="a ln" style="left:19.19px;top:727.98px;width:1564.54px;height:2px;"></div>
<div class="a ln" style="left:19.19px;top:757.02px;width:1564.54px;height:2px;"></div>
<div class="a ln" style="left:19.19px;top:786.05px;width:1564.54px;height:2px;"></div>
<div class="a ln" style="left:19.19px;top:815.08px;width:1564.54px;height:2px;"></div>
<div class="a ln" style="left:19.19px;top:844.12px;width:1564.54px;height:2px;"></div>
<div class="a ln" style="left:19.19px;top:873.15px;width:1564.54px;height:2px;"></div>
<div class="a ln" style="left:19.19px;top:902.19px;width:1564.54px;height:2px;"></div>
<div class="a ln" style="left:19.19px;top:931.22px;width:1564.54px;height:2px;"></div>
<div class="a ln" style="left:825.62px;top:404.92px;width:303.01px;height:2px;"></div>
</div>
<div style="position:absolute;left:18.1px;top:20.1px;font-size:8.55px;line-height:11px;font-weight:bold;color:#383838;white-space:nowrap;letter-spacing:-0.05px;-webkit-text-stroke:.2px #383838;text-shadow:1.6px 1.6px 1.4px rgba(0,0,0,.42);">楽々遊技台管理</div>
<svg style="position:absolute;left:0;top:0" width="120" height="66" viewBox="0 0 120 66">
<defs><filter id="ds" x="-10%" y="-10%" width="130%" height="130%"><feGaussianBlur in="SourceAlpha" stdDeviation="0.9"/><feOffset dx="1.8" dy="1.8"/><feComponentTransfer><feFuncA type="linear" slope="0.5"/></feComponentTransfer><feMerge><feMergeNode/><feMergeNode in="SourceGraphic"/></feMerge></filter></defs>
<g filter="url(#ds)" font-family="Liberation Serif, serif" font-style="italic">
<text x="20.8" y="48.3" font-size="22.5" fill="#e33030">E</text>
<text x="33.6" y="48.1" font-size="14.8" fill="#222" stroke="#222" stroke-width=".3" letter-spacing="-0.3">asy</text>
<text x="52.6" y="48.3" font-size="22.5" fill="#e33030">H</text>
<text x="68.8" y="48.1" font-size="14.8" fill="#222" stroke="#222" stroke-width=".3">a</text>
<path d="M51.2 42.3 C48.5 47 45.5 52.5 42.2 57.6" fill="none" stroke="#222" stroke-width="1.25" stroke-linecap="round"/>
<path d="M52.2 36 C53.2 32.6 57.5 32 59.8 34" fill="none" stroke="#e33030" stroke-width="0.7" stroke-linecap="round"/>
<g fill="none" stroke="#222" stroke-linecap="round" stroke-linejoin="round">
<path d="M76.6 47.2 C80.5 44 85.8 39 88.5 35.2 C89.4 33.8 88.7 33.5 87.9 34.6" stroke-width="0.75"/>
<path d="M87.9 34.6 C85.6 38 82.8 43.6 82.5 46.4 C82.3 48 83.4 48 84.4 47" stroke-width="1.6"/>
<path d="M84.4 47 C88.6 42.6 93.8 34.6 96.2 29.6 C96.9 28 96.2 27.8 95.5 29" stroke-width="0.75"/>
<path d="M95.5 29 C92.8 33.6 88.9 42.6 88.6 46.3 C88.4 48.1 89.8 48.2 91.4 46.7" stroke-width="1.6"/>
</g>
</g>
</svg>

<div id="frame">
<div style="left:0;top:0;width:1149px;height:1px;background:#444"></div>
<div style="left:0;top:0;width:1px;height:647px;background:#555"></div>
<div style="left:1148px;top:0;width:1px;height:647px;background:#666"></div>
<div style="left:0;top:643px;width:1149px;height:1px;background:#f4f4f4"></div>
<div style="left:0;top:644px;width:1149px;height:1px;background:#cfcfcf"></div>
<div style="left:0;top:645px;width:1149px;height:1px;background:#7a7a7a"></div>
<div style="left:0;top:646px;width:1149px;height:1px;background:#4c4c4c"></div>
</div>
</body></html>
